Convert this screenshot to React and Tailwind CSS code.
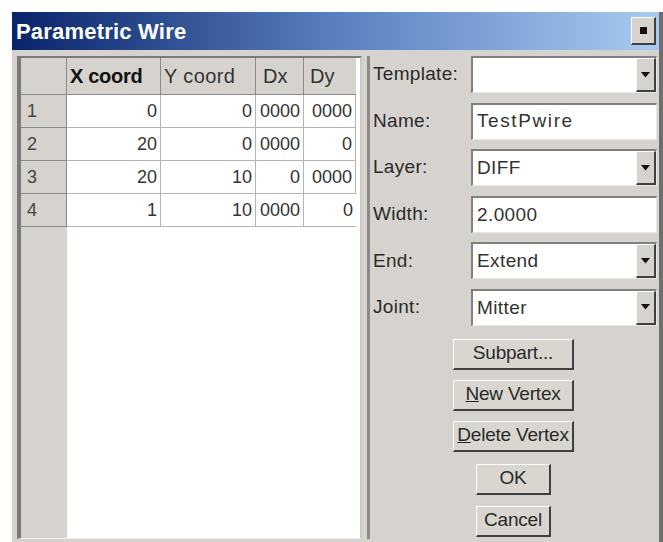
import React from "react";

const rows = [
  ["1", "0", "0", "0000", "0000"],
  ["2", "20", "0", "0000", "0"],
  ["3", "20", "10", "0", "0000"],
  ["4", "1", "10", "0000", "0"],
];

const Arrow = () => (
  <div className="w-[20px] h-full shrink-0 bg-[#d6d3ce] border-t border-l border-white border-b-2 border-r-2 border-b-[#404040] border-r-[#404040] flex items-center justify-center">
    <svg width="9" height="6" viewBox="0 0 9 6">
      <path d="M0 0h9L4.5 5.5z" fill="#111" />
    </svg>
  </div>
);

const Field = ({ label, value, combo, wide }) => (
  <div className="flex items-center h-[37px] shrink-0 mb-[9.6px]">
    <div className="w-[101px] pl-[3px] text-[19px] text-[#2a2a2a] tracking-[0.3px]">
      {label}
    </div>
    <div className="flex-1 h-full flex bg-white border-t-2 border-l-2 border-[#808080] border-b border-r border-b-[#e8e8e8] border-r-[#e8e8e8]">
      <div
        className={`flex-1 flex items-center pl-[4px] text-[19px] text-[#333] ${
          wide ? "tracking-[1.6px]" : "tracking-[0.4px]"
        }`}
      >
        {value}
      </div>
      {combo && <Arrow />}
    </div>
  </div>
);

const Btn = ({ children, w, mb }) => (
  <div
    className={`${w} ${mb} h-[31px] shrink-0 mx-auto flex items-center justify-center bg-[#d9d6d0] border-t border-l border-white border-b-2 border-r-2 border-b-[#404040] border-r-[#404040] text-[19px] text-[#2a2a2a] tracking-[-0.2px] whitespace-nowrap overflow-hidden`}
  >
    {children}
  </div>
);

export default function App() {
  return (
    <div className="w-[663px] h-[542px] bg-white pt-[12px] pl-[12px] overflow-hidden font-['Liberation_Sans',Arial,sans-serif]">
      <div className="w-[651px] h-[530px] flex flex-col border-r-4 border-[#6e6e6e] overflow-hidden">
        {/* title bar */}
        <div className="h-[38px] shrink-0 flex items-center justify-between pl-[4px] pr-[3px] bg-linear-to-r from-[#0a246a] via-[#5b7fc0] to-[#a9cbef]">
          <span className="text-white font-bold text-[22px] tracking-[0.2px]">
            Parametric Wire
          </span>
          <div className="w-[25px] h-[28px] bg-[#d6d3ce] border-t border-l border-white border-b-2 border-r-2 border-b-[#404040] border-r-[#404040] flex items-center justify-center">
            <div className="w-[7px] h-[7px] bg-[#111]" />
          </div>
        </div>

        <div className="flex-1 min-h-0 flex bg-[#d6d3ce] pt-[6px] pb-[3px]">
          {/* vertex grid */}
          <div className="w-[345px] ml-[5px] flex flex-col bg-white border-l-[4px] border-t-2 border-[#7a7a7a] border-r-2 border-r-[#c8c8c8] border-b border-b-[#f0f0f0]">
            <div className="grid grid-cols-[46px_94px_95px_48px_52px]">
              <div className="h-[37px] bg-[#d6d3ce] border-r border-b border-[#8a8a8a]" />
              <div className="h-[37px] bg-[#d6d3ce] border-r border-b border-[#8a8a8a] flex items-center pl-[3px] text-[20px] font-bold text-[#111] tracking-[-0.3px]">
                X coord
              </div>
              <div className="h-[37px] bg-[#d6d3ce] border-r border-b border-[#8a8a8a] flex items-center pl-[3px] text-[20px] text-[#333] tracking-[0.4px]">
                Y coord
              </div>
              <div className="h-[37px] bg-[#d6d3ce] border-r border-b border-[#8a8a8a] flex items-center pl-[7px] text-[20px] text-[#333]">
                Dx
              </div>
              <div className="h-[37px] bg-[#d6d3ce] border-b border-[#8a8a8a] flex items-center pl-[6px] text-[20px] text-[#333]">
                Dy
              </div>
              {rows.map((r) => (
                <React.Fragment key={r[0]}>
                  <div className="h-[33px] bg-[#d6d3ce] border-r border-b border-[#8a8a8a] flex items-center pl-[6px] text-[18px] text-[#444]">
                    {r[0]}
                  </div>
                  {r.slice(1).map((v, i) => (
                    <div
                      key={i}
                      className="h-[33px] border-r border-b border-[#b4b4b4] flex items-center justify-end pr-[3px] text-[18px] text-[#333] last:border-r-0"
                    >
                      {v}
                    </div>
                  ))}
                </React.Fragment>
              ))}
            </div>
            <div className="flex-1 flex">
              <div className="w-[46px] bg-[#d6d3ce]" />
              <div className="flex-1 bg-white" />
            </div>
          </div>

          {/* properties */}
          <div className="flex-1 ml-[5px] pr-[2px] border-l-[3px] border-[#8a8a8a] flex flex-col">
            <Field label="Template:" value="" combo />
            <Field label="Name:" value="TestPwire" wide />
            <Field label="Layer:" value="DIFF" combo />
            <Field label="Width:" value="2.0000" />
            <Field label="End:" value="Extend" combo />
            <Field label="Joint:" value="Mitter" combo />
            <div className="pt-[3px] flex flex-col">
              <Btn w="w-[121px]" mb="mb-[10px]">Subpart...</Btn>
              <Btn w="w-[121px]" mb="mb-[10px]">
                <span className="underline">N</span>ew Vertex
              </Btn>
              <Btn w="w-[121px]" mb="mb-[12px]">
                <span className="underline">D</span>elete Vertex
              </Btn>
              <Btn w="w-[75px]" mb="mb-[11px]">OK</Btn>
              <Btn w="w-[75px]" mb="mb-0">Cancel</Btn>
            </div>
          </div>
        </div>
      </div>
    </div>
  );
}
